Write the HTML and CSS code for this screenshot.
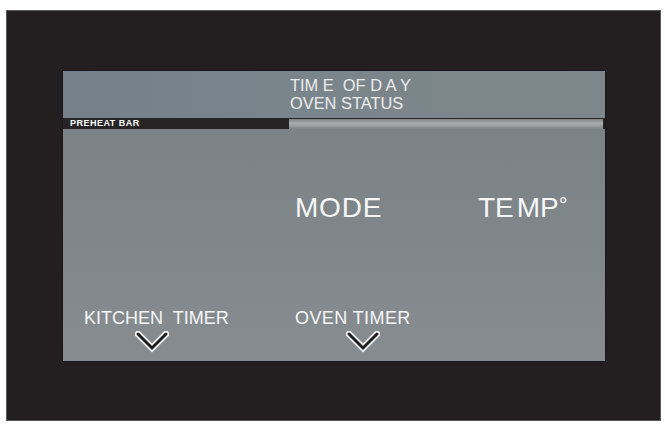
FILE: index.html
```html
<!DOCTYPE html>
<html>
<head>
<meta charset="utf-8">
<link rel="stylesheet" href="styles.css">
</head>
<body>
<div class="frame">
  <div class="screen">
    <div class="header">
      <div class="hline">TIM E&nbsp; OF D A Y</div>
      <div class="hline">OVEN STATUS</div>
    </div>
    <div class="preheat">
      <div class="preheat-label">PREHEAT BAR</div>
      <div class="preheat-track"></div>
    </div>
    <div class="main">
      <div class="row-big">
        <div class="mode">MODE</div>
        <div class="temp">TE<span class="gap"></span>MP<span class="deg">°</span></div>
      </div>
      <div class="row-timers">
        <div class="timer kitchen">
          <div class="tlabel">KITCHEN&nbsp; TIMER</div>
          <svg class="chev" width="34" height="22" viewBox="0 0 34 22">
            <polyline points="3,3 17,17 31,3" fill="none" stroke="#f2f2f2" stroke-width="6.5" stroke-linejoin="miter" stroke-linecap="round"/>
            <polyline points="3,3 17,17 31,3" fill="none" stroke="#1e1e20" stroke-width="3" stroke-linejoin="miter" stroke-linecap="round"/>
          </svg>
        </div>
        <div class="timer oven">
          <div class="tlabel">OVEN TIMER</div>
          <svg class="chev" width="34" height="22" viewBox="0 0 34 22">
            <polyline points="3,3 17,17 31,3" fill="none" stroke="#f2f2f2" stroke-width="6.5" stroke-linejoin="miter" stroke-linecap="round"/>
            <polyline points="3,3 17,17 31,3" fill="none" stroke="#1e1e20" stroke-width="3" stroke-linejoin="miter" stroke-linecap="round"/>
          </svg>
        </div>
      </div>
    </div>
  </div>
</div>
</body>
</html>
```
FILE: styles.css
```css
html, body {
  margin: 0;
  padding: 0;
  background: #ffffff;
}
body {
  width: 665px;
  height: 426px;
  font-family: "Liberation Sans", Arial, sans-serif;
}
.frame {
  box-sizing: border-box;
  margin: 10px 0 0 6px;
  width: 655px;
  height: 411px;
  background: #231f20;
  border: 1px solid #5a5859;
  padding: 60px 55px 59px 56px;
}
.screen {
  width: 542px;
  height: 290px;
  display: flex;
  flex-direction: column;
  box-shadow: 0 0 0 1px #19171a;
}
.header {
  height: 47px;
  box-sizing: border-box;
  padding: 5px 0 0 227px;
  background: linear-gradient(90deg, #75808a 0%, #7a858b 50%, #7e878b 100%);
  color: #ececec;
  font-size: 16.4px;
  line-height: 18px;
}
.hline {
  white-space: nowrap;
}
.preheat {
  height: 11px;
  display: flex;
  background: #272425;
}
.preheat-label {
  width: 226px;
  box-sizing: border-box;
  padding-left: 7px;
  color: #ffffff;
  font-weight: bold;
  font-size: 9px;
  line-height: 11px;
  letter-spacing: 0.5px;
}
.preheat-track {
  flex: 1;
  margin: 1px 2px 0 0;
  background: linear-gradient(180deg, #7f8588 0%, #a9acae 45%, #9a9ea0 70%, #7e8487 100%);
}
.main {
  flex: 1;
  display: flex;
  flex-direction: column;
  padding-top: 63px;
  background: linear-gradient(180deg, #7c8388 0%, #80878b 50%, #878c90 100%);
  color: #f6f6f6;
}
.row-big {
  display: flex;
  padding-left: 232px;
  font-size: 28px;
  line-height: 32px;
  letter-spacing: 0.8px;
}
.mode {
  width: 183px;
}
.temp {
  white-space: nowrap;
  letter-spacing: 0;
}
.gap {
  display: inline-block;
  width: 3px;
}
.deg {
  font-size: 22px;
  vertical-align: 4px;
  line-height: 0;
}
.row-timers {
  display: flex;
  margin-top: 84px;
  padding-left: 21px;
  font-size: 18px;
  line-height: 20px;
}
.timer {
  display: flex;
  flex-direction: column;
}
.kitchen {
  width: 211px;
}
.tlabel {
  white-space: nowrap;
}
.oven .tlabel {
  letter-spacing: 0.4px;
}
.chev {
  display: block;
  margin: 3px 0 0 51px;
}
```
